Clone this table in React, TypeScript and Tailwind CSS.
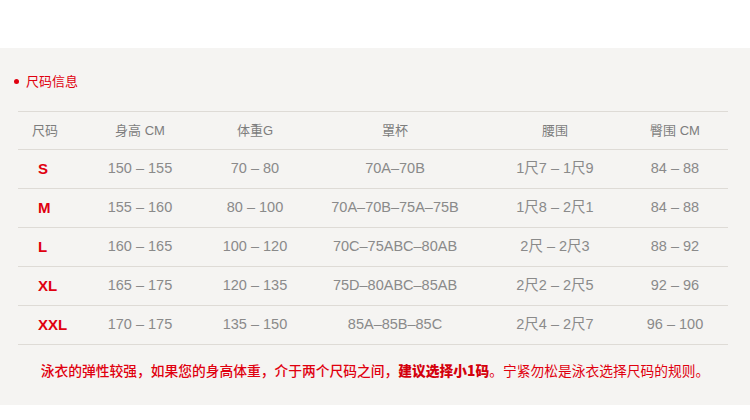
import React from "react";

interface SizeRow {
  size: string;
  height: string;
  weight: string;
  cup: string;
  waist: string;
  hip: string;
}

const rows: SizeRow[] = [
  { size: "S", height: "150 – 155", weight: "70 – 80", cup: "70A–70B", waist: "1尺7 – 1尺9", hip: "84 – 88" },
  { size: "M", height: "155 – 160", weight: "80 – 100", cup: "70A–70B–75A–75B", waist: "1尺8 – 2尺1", hip: "84 – 88" },
  { size: "L", height: "160 – 165", weight: "100 – 120", cup: "70C–75ABC–80AB", waist: "2尺 – 2尺3", hip: "88 – 92" },
  { size: "XL", height: "165 – 175", weight: "120 – 135", cup: "75D–80ABC–85AB", waist: "2尺2 – 2尺5", hip: "92 – 96" },
  { size: "XXL", height: "170 – 175", weight: "135 – 150", cup: "85A–85B–85C", waist: "2尺4 – 2尺7", hip: "96 – 100" },
];

const cols = "grid grid-cols-[54px_136px_94px_186px_134px_106px] items-center text-center";

export default function App() {
  return (
    <div className="w-[750px] h-[420px] bg-white font-['Liberation_Sans','Noto_Sans_CJK_SC',sans-serif]">
      <div className="h-12" />

      <div className="bg-[#f5f4f2] h-[357px] pt-[23px]">
        {/* Section title */}
        <div className="flex items-center h-5 pl-[14px] gap-[7px]">
          <span className="w-[5px] h-[5px] rounded-full bg-[#e0000f]" />
          <span className="text-[13px] text-[#e0000f] font-['Noto_Sans_CJK_SC',sans-serif]">尺码信息</span>
        </div>

        {/* Size table */}
        <div className="mx-[18px] w-[710px] mt-5 border-t border-[#dedbd6]">
          <div className={`${cols} h-[38px] border-b border-[#dedbd6] text-[13px] text-[#7d7d7d]`}>
            <span>尺码</span>
            <span>身高 CM</span>
            <span>体重G</span>
            <span>罩杯</span>
            <span>腰围</span>
            <span>臀围 CM</span>
          </div>
          {rows.map((r) => (
            <div key={r.size} className={`${cols} h-[39px] border-b border-[#dedbd6] text-[14.5px] text-[#8a8a8a]`}>
              <span className="text-left pl-5 text-[15px] font-bold text-[#e0000f]">{r.size}</span>
              <span>{r.height}</span>
              <span>{r.weight}</span>
              <span>{r.cup}</span>
              <span>{r.waist}</span>
              <span>{r.hip}</span>
            </div>
          ))}
        </div>

        {/* Note */}
        <p className="mt-[15px] h-5 leading-5 text-center text-[13.75px] text-[#e0000f] font-['Noto_Sans_CJK_SC',sans-serif]">
          <span className="font-medium">泳衣的弹性较强，如果您的身高体重，介于两个尺码之间，</span>
          <span className="font-black text-[#d4000c]">建议选择小1码</span>
          <span>。宁紧勿松是泳衣选择尺码的规则。</span>
        </p>
      </div>
    </div>
  );
}
